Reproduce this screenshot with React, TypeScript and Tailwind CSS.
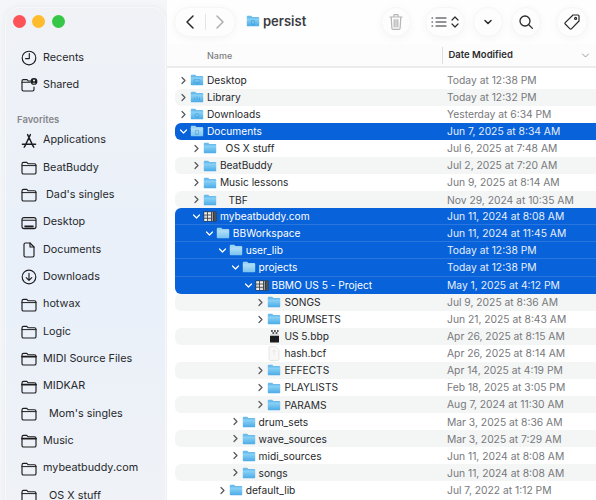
import React from "react";

const FONT = "font-['Inter','Noto_Sans',sans-serif]";

function BlueFolder({ mark, selected }: { mark?: string; selected?: boolean }) {
  const id = selected ? "fs" : "fn";
  return (
    <svg width="14" height="12" viewBox="0 0 14 12" className="shrink-0">
      <defs>
        <linearGradient id={id} x1="0" y1="0" x2="0" y2="1">
          <stop offset="0" stopColor={selected ? "#b4e0f8" : "#8fd5f7"} />
          <stop offset="1" stopColor={selected ? "#78c3ee" : "#4cabe6"} />
        </linearGradient>
      </defs>
      <path d="M.8 2C.8 1.2 1.3.8 2 .8H5.2L6.4 2H12C12.8 2 13.2 2.5 13.2 3.2V4H.8Z" fill={selected ? "#9ad3f3" : "#6bbcec"} />
      <path d="M.8 3.4H13.2V10.2C13.2 10.8 12.8 11.2 12.2 11.2H1.8C1.2 11.2.8 10.8.8 10.2Z" fill={`url(#${id})`} />
      {mark === "circle" && <circle cx="7" cy="7.4" r="2" fill="none" stroke="#3b97d2" strokeWidth=".7" opacity=".7" />}
      {mark === "doc" && <path d="M5.5 5.4H8.5V9.4H5.5Z" fill="none" stroke="#3b97d2" strokeWidth=".7" opacity=".7" />}
      {mark === "desk" && <path d="M4 5.6H10V8.6H4ZM6 9.6H8" fill="none" stroke="#3b97d2" strokeWidth=".7" opacity=".7" />}
      {mark === "lib" && <path d="M4.5 9V6.4M7 9V5.4M9.5 9V6.4" fill="none" stroke="#3b97d2" strokeWidth=".8" opacity=".7" />}
    </svg>
  );
}

function PackageIcon() {
  return (
    <svg width="14" height="11" viewBox="0 0 14 11" className="shrink-0">
      <rect x="0.5" y="0.5" width="13" height="10" fill="#33363a" />
      <rect x="1.2" y="1.2" width="3" height="2.4" fill="#f0f0f0" />
      <rect x="5" y="1.2" width="3" height="2.4" fill="#f0f0f0" />
      <rect x="1.2" y="4.4" width="3" height="2.4" fill="#d8d8d8" />
      <rect x="5" y="4.4" width="3" height="2.4" fill="#f0f0f0" />
      <rect x="1.2" y="7.6" width="3" height="2.4" fill="#f0f0f0" />
      <rect x="5" y="7.6" width="3" height="2.4" fill="#d8d8d8" />
      <rect x="8.8" y="1" width="1.2" height="9" fill="#9a9da0" />
      <rect x="10.8" y="1" width="2.4" height="9" fill="#4c4f53" />
    </svg>
  );
}

function BbpIcon() {
  return (
    <svg width="11" height="14" viewBox="0 0 11 14" className="shrink-0">
      <rect x="1" y="6.6" width="9" height="6.9" rx=".5" fill="#1c1c1e" />
      <rect x="1" y="5.4" width="9" height="1.2" fill="#d0d0d0" />
      <path d="M2 1.2h1.8v1.6H2zM5 1.2h1.8v1.6H5zM8 1.2h1.6v1.6H8zM3.4 3.2h1.8v1.6H3.4zM6.6 3.2h1.8v1.6H6.6z" fill="#2a2a2c" />
    </svg>
  );
}

function DocIcon() {
  return (
    <svg width="12" height="15" viewBox="0 0 12 15" className="shrink-0">
      <path d="M1 1.5C1 1 1.4.6 2 .6H7.6L11 4V13.4C11 14 10.6 14.4 10 14.4H2C1.4 14.4 1 14 1 13.4Z" fill="#f8f8f8" stroke="#dcdcdc" strokeWidth=".7" />
      <path d="M6 4V9M4.5 5.5L6 4L7.5 5.5" stroke="#e2e2e2" fill="none" strokeWidth=".8" />
    </svg>
  );
}

function Chevron({ open, selected }: { open?: boolean; selected?: boolean }) {
  return (
    <svg width="9" height="9" viewBox="0 0 9 9" className="shrink-0">
      <path
        d={open ? "M1.5 3L4.5 6L7.5 3" : "M3 1.5L6 4.5L3 7.5"}
        fill="none"
        stroke={selected ? "#ffffff" : "#55585c"}
        strokeWidth="1.2"
        strokeLinecap="round"
        strokeLinejoin="round"
      />
    </svg>
  );
}

type Row = {
  name: string;
  date: string;
  level: number;
  icon?: "folder" | "pkg" | "bbp" | "doc";
  mark?: string;
  open?: boolean;
  noChev?: boolean;
  sel?: "one" | "first" | "mid" | "last";
};

const rows: Row[] = [
  { name: "Desktop", date: "Today at 12:38 PM", level: 0, mark: "desk" },
  { name: "Library", date: "Today at 12:32 PM", level: 0, mark: "lib" },
  { name: "Downloads", date: "Yesterday at 6:34 PM", level: 0, mark: "circle" },
  { name: "Documents", date: "Jun 7, 2025 at 8:34 AM", level: 0, mark: "doc", open: true, sel: "one" },
  { name: "  OS X stuff", date: "Jul 6, 2025 at 7:48 AM", level: 1 },
  { name: "BeatBuddy", date: "Jul 2, 2025 at 7:20 AM", level: 1 },
  { name: "Music lessons", date: "Jun 9, 2025 at 8:14 AM", level: 1 },
  { name: "   TBF", date: "Nov 29, 2024 at 10:35 AM", level: 1 },
  { name: "mybeatbuddy.com", date: "Jun 11, 2024 at 8:08 AM", level: 1, icon: "pkg", open: true, sel: "first" },
  { name: "BBWorkspace", date: "Jun 11, 2024 at 11:45 AM", level: 2, open: true, sel: "mid" },
  { name: "user_lib", date: "Today at 12:38 PM", level: 3, open: true, sel: "mid" },
  { name: "projects", date: "Today at 12:38 PM", level: 4, open: true, sel: "mid" },
  { name: "BBMO US 5 - Project", date: "May 1, 2025 at 4:12 PM", level: 5, icon: "pkg", open: true, sel: "last" },
  { name: "SONGS", date: "Jul 9, 2025 at 8:36 AM", level: 6 },
  { name: "DRUMSETS", date: "Jun 21, 2025 at 8:43 AM", level: 6 },
  { name: "US 5.bbp", date: "Apr 26, 2025 at 8:15 AM", level: 6, icon: "bbp", noChev: true },
  { name: "hash.bcf", date: "Apr 26, 2025 at 8:14 AM", level: 6, icon: "doc", noChev: true },
  { name: "EFFECTS", date: "Apr 14, 2025 at 4:19 PM", level: 6 },
  { name: "PLAYLISTS", date: "Feb 18, 2025 at 3:05 PM", level: 6 },
  { name: "PARAMS", date: "Aug 7, 2024 at 11:30 AM", level: 6 },
  { name: "drum_sets", date: "Mar 3, 2025 at 8:36 AM", level: 4 },
  { name: "wave_sources", date: "Mar 3, 2025 at 7:29 AM", level: 4 },
  { name: "midi_sources", date: "Jun 11, 2024 at 8:08 AM", level: 4 },
  { name: "songs", date: "Jun 11, 2024 at 8:08 AM", level: 4 },
  { name: "default_lib", date: "Jul 7, 2022 at 1:12 PM", level: 3 },
];

function ListRow({ row, index }: { row: Row; index: number }) {
  const sel = !!row.sel;
  let bg = index % 2 === 1 ? "bg-[#f4f5f5] rounded-l-[6px]" : "";
  if (row.sel === "one") bg = "bg-[#0862d9] rounded-l-[6px]";
  if (row.sel === "first") bg = "bg-[#0862d9] rounded-tl-[6px] border-b border-[#2a76dd]";
  if (row.sel === "mid") bg = "bg-[#0862d9] border-b border-[#2a76dd]";
  if (row.sel === "last") bg = "bg-[#0862d9] rounded-bl-[6px]";
  return (
    <div className={`flex items-center h-[17.08px] ${bg}`}>
      <div
        className="flex items-center w-[272px] shrink-0"
        style={{ paddingLeft: 4 + row.level * 12.9 }}
      >
        <div className="w-[9px] mr-[2px] shrink-0 flex justify-center">
          {!row.noChev && <Chevron open={row.open} selected={sel} />}
        </div>
        <div className="w-[14px] shrink-0 flex justify-center">
          {row.icon === "pkg" ? (
            <PackageIcon />
          ) : row.icon === "bbp" ? (
            <BbpIcon />
          ) : row.icon === "doc" ? (
            <DocIcon />
          ) : (
            <BlueFolder mark={row.mark} selected={sel} />
          )}
        </div>
        <span className={`ml-[3px] text-[10.2px] leading-none whitespace-pre ${sel ? "text-white" : "text-[#26282b]"}`}>
          {row.name}
        </span>
      </div>
      <span className={`text-[10.3px] leading-none whitespace-pre ${sel ? "text-[#e6effb]" : "text-[#77797c]"}`}>
        {row.date}
      </span>
    </div>
  );
}

type SideIcon = "clock" | "shared" | "apps" | "folder" | "folder2" | "desktop" | "doc" | "download";

function SidebarIcon({ kind }: { kind: SideIcon }) {
  const s = { fill: "none", stroke: "#1d1d1f", strokeWidth: 1.15, strokeLinecap: "round" as const, strokeLinejoin: "round" as const };
  return (
    <svg width="18" height="18" viewBox="0 0 18 18" className="shrink-0">
      {kind === "clock" && (
        <g {...s}>
          <circle cx="9" cy="9" r="6.8" />
          <path d="M9.3 4.6V9.6H5.6" />
        </g>
      )}
      {kind === "shared" && (
        <g>
          <path d="M2 5C2 4.2 2.5 3.6 3.3 3.6H7L8.2 5H10.5M2 5.4V13.6C2 14.4 2.5 15 3.3 15H12.7C13.5 15 14 14.4 14 13.6V11" {...s} />
          <path d="M2 6.2H10" {...s} />
          <circle cx="14" cy="5.4" r="3.4" fill="#1d1d1f" />
          <circle cx="14" cy="4.4" r="1" fill="#fff" />
          <path d="M12.4 7.4C12.6 6.4 15.4 6.4 15.6 7.4Z" fill="#fff" />
        </g>
      )}
      {kind === "apps" && (
        <g {...s} strokeWidth={1.4}>
          <path d="M10.4 2.6L4.8 14.4M7.6 2.6L13.2 14.4M2.4 12.2H15.6M4.2 15.2L5 14M13.8 15.2L13 14" />
        </g>
      )}
      {(kind === "folder" || kind === "folder2") && (
        <g {...s}>
          <path d="M2 5C2 4 2.6 3.4 3.5 3.4H6.8L8 4.7H14.4C15.4 4.7 16 5.3 16 6.2V13.4C16 14.4 15.4 15 14.4 15H3.6C2.6 15 2 14.4 2 13.4Z" />
          <path d="M2 6.6H16" strokeWidth={kind === "folder2" ? 1.8 : 1} />
        </g>
      )}
      {kind === "desktop" && (
        <g {...s}>
          <rect x="2" y="3.6" width="14" height="11" rx="2" />
          <path d="M2.4 6.2H15.6" />
          <path d="M4.4 12.4H13.6" strokeWidth={2} strokeLinecap="butt" />
        </g>
      )}
      {kind === "doc" && (
        <g {...s}>
          <path d="M4 3.5C4 2.6 4.6 2 5.4 2H10L14 6V14.6C14 15.4 13.4 16 12.6 16H5.4C4.6 16 4 15.4 4 14.6Z" />
          <path d="M10 2V6H14" />
        </g>
      )}
      {kind === "download" && (
        <g {...s}>
          <circle cx="9" cy="9" r="6.8" />
          <path d="M9 5.2V12.2M6.2 9.6L9 12.4L11.8 9.6" />
        </g>
      )}
    </svg>
  );
}

const favorites: { name: string; icon: SideIcon }[] = [
  { name: "Applications", icon: "apps" },
  { name: "BeatBuddy", icon: "folder" },
  { name: " Dad's singles", icon: "folder" },
  { name: "Desktop", icon: "desktop" },
  { name: "Documents", icon: "doc" },
  { name: "Downloads", icon: "download" },
  { name: "hotwax", icon: "folder" },
  { name: "Logic", icon: "folder" },
  { name: "MIDI Source Files", icon: "folder2" },
  { name: "MIDKAR", icon: "folder2" },
  { name: "  Mom's singles", icon: "folder" },
  { name: "Music", icon: "folder2" },
  { name: "mybeatbuddy.com", icon: "folder" },
  { name: "  OS X stuff", icon: "folder" },
];

function SideRow({ name, icon }: { name: string; icon: SideIcon }) {
  return (
    <div className="flex items-center h-[27.33px] pl-[14.5px] shrink-0">
      <SidebarIcon kind={icon} />
      <span className="pl-[5.5px] text-[10.8px] leading-none text-[#26282b] whitespace-pre">{name}</span>
    </div>
  );
}

function Circle({ className, children }: { className?: string; children: React.ReactNode }) {
  return (
    <div className={`flex items-center justify-center h-[30px] rounded-full bg-[#fdfdfd] border border-[#f6f6f6] shadow-[0_2px_10px_rgba(0,0,0,0.04)] shrink-0 ${className ?? ""}`}>
      {children}
    </div>
  );
}

export default function App() {
  const ts = { fill: "none", stroke: "#2b2b2e", strokeWidth: 1.3, strokeLinecap: "round" as const, strokeLinejoin: "round" as const };
  return (
    <div className={`${FONT} w-[596px] h-[500px] overflow-hidden flex bg-white`}>
      <div className="w-[167px] h-[500px] shrink-0 bg-[#f4f6f9] pl-[5px] pt-[7px] overflow-hidden">
        <div className="w-[161px] h-[520px] rounded-[14px] bg-gradient-to-b from-[#f0f2f6] via-[#e9f0fa] to-[#f0f2f6] border border-[#f7f8fa] flex flex-col overflow-hidden shadow-[0_0_6px_rgba(0,0,0,0.06)]">
          <div className="flex items-center gap-[6.6px] pl-[6.5px] h-[25px] mt-[1px] shrink-0">
            <div className="w-[13px] h-[13px] rounded-full bg-[#fd5257]" />
            <div className="w-[13px] h-[13px] rounded-full bg-[#fdbb2d]" />
            <div className="w-[13px] h-[13px] rounded-full bg-[#36c748]" />
          </div>
          <div className="-ml-[1px] flex flex-col">
            <div className="h-[10.4px] shrink-0" />
            <SideRow name="Recents" icon="clock" />
            <SideRow name="Shared" icon="shared" />
            <div className="h-[28px] pl-[12px] pb-[3px] flex items-end shrink-0 text-[9.5px] font-semibold leading-none text-[#85878c]">
              Favorites
            </div>
            {favorites.map((f) => (
              <SideRow key={f.name} name={f.name} icon={f.icon} />
            ))}
          </div>
        </div>
      </div>

      <div className="flex-1 min-w-0 flex flex-col">
        <div className="h-[44px] shrink-0 flex items-start pt-[7px] pl-[7px] bg-[#fefefe]">
          <div className="flex items-center h-[30px] w-[62px] rounded-full bg-[#fdfdfd] border border-[#f6f6f6] shadow-[0_2px_10px_rgba(0,0,0,0.04)]">
            <div className="w-[30px] flex justify-center">
              <svg width="12" height="16" viewBox="0 0 12 16"><path d="M9 2L3 8L9 14" {...ts} strokeWidth={1.5} /></svg>
            </div>
            <div className="w-px h-[16px] bg-[#e5e5e5]" />
            <div className="w-[30px] flex justify-center">
              <svg width="12" height="16" viewBox="0 0 12 16"><path d="M3 2L9 8L3 14" {...ts} stroke="#aeaeb0" strokeWidth={1.5} /></svg>
            </div>
          </div>
          <div className="flex items-center h-[28px] ml-[10px] w-[135px]">
            <BlueFolder mark="doc" />
            <span className="ml-[3px] text-[13px] font-semibold leading-none text-[#3a3b3e]">persist</span>
          </div>
          <Circle className="w-[30px]">
            <svg width="16" height="18" viewBox="0 0 16 18" fill="none" stroke="#b3b4b6" strokeWidth="1.2" strokeLinecap="round" strokeLinejoin="round">
              <path d="M2 4H14M5.8 4V2.4C5.8 1.9 6.1 1.6 6.6 1.6H9.4C9.9 1.6 10.2 1.9 10.2 2.4V4M3.2 4L3.9 15.2C3.95 16 4.4 16.4 5 16.4H11C11.6 16.4 12.05 16 12.1 15.2L12.8 4M6.2 6.5V14M8 6.5V14M9.8 6.5V14" />
            </svg>
          </Circle>
          <Circle className="w-[40px] ml-[14px] gap-[4px]">
            <svg width="16" height="12" viewBox="0 0 16 12" fill="none" stroke="#2b2b2e" strokeWidth="1.2" strokeLinecap="round">
              <path d="M5 2H15M5 6H15M5 10H15M1 2H1.6M1 6H1.6M1 10H1.6" />
            </svg>
            <svg width="8" height="14" viewBox="0 0 8 14" fill="none" stroke="#2b2b2e" strokeWidth="1.2" strokeLinecap="round" strokeLinejoin="round">
              <path d="M1 5L4 2L7 5M1 9L4 12L7 9" />
            </svg>
          </Circle>
          <Circle className="w-[30px] ml-[8px]">
            <svg width="10" height="8" viewBox="0 0 10 8" fill="none" stroke="#2b2b2e" strokeWidth="1.5" strokeLinecap="round" strokeLinejoin="round">
              <path d="M2 2.5L5 5.5L8 2.5" />
            </svg>
          </Circle>
          <Circle className="w-[30px] ml-[8px]">
            <svg width="16" height="16" viewBox="0 0 16 16" fill="none" stroke="#2b2b2e" strokeWidth="1.3" strokeLinecap="round">
              <circle cx="7" cy="7" r="5" />
              <path d="M10.8 10.8L14.4 14.4" />
            </svg>
          </Circle>
          <Circle className="w-[32px] ml-[15px]">
            <svg width="18" height="18" viewBox="0 0 18 18" fill="none" stroke="#2b2b2e" strokeWidth="1.2" strokeLinejoin="round">
              <path d="M10 2H15C15.6 2 16 2.4 16 3V8L8.4 15.8C8 16.2 7.4 16.2 7 15.8L2.2 11C1.8 10.6 1.8 10 2.2 9.6Z" />
              <circle cx="12.6" cy="5.4" r="1" />
            </svg>
          </Circle>
        </div>
        <div className="h-[24px] shrink-0 flex items-center bg-[#fcfcfc] border-b-2 border-[#ececec]">
          <span className="ml-[40px] w-[235px] text-[9px] font-medium leading-none text-[#7c7e82]">Name</span>
          <div className="w-px h-[17px] bg-[#dedede]" />
          <span className="ml-[5.5px] text-[9.5px] font-semibold leading-none text-[#2c2d30]">Date Modified</span>
          <svg width="9" height="7" viewBox="0 0 9 7" className="ml-[68px]" fill="none" stroke="#9a9ca0" strokeWidth="1" strokeLinecap="round" strokeLinejoin="round">
            <path d="M1.5 2L4.5 5L7.5 2" />
          </svg>
        </div>
        <div className="pl-[8px] pt-[3.6px] flex flex-col">
          {rows.map((r, i) => (
            <ListRow key={r.name + i} row={r} index={i} />
          ))}
        </div>
      </div>
    </div>
  );
}
